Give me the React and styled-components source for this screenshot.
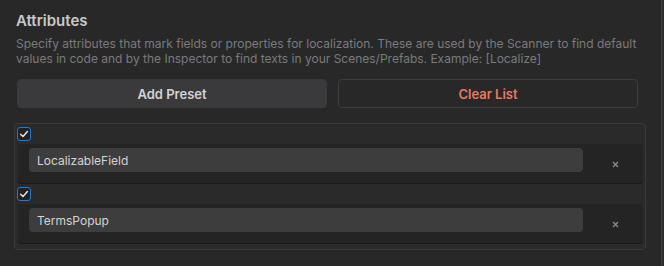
import React from 'react';
import styled, { createGlobalStyle } from 'styled-components';

const GlobalStyle = createGlobalStyle`
  html, body {
    margin: 0;
    padding: 0;
    background: #282829;
  }
  body {
    font-family: Inter, "Noto Sans", "Liberation Sans", sans-serif;
    -webkit-font-smoothing: antialiased;
  }
`;

const Page = styled.div`
  box-sizing: border-box;
  width: 664px;
  height: 266px;
  padding: 11px 16px 0 14px;
  background: #282829;
  border-right: 2px solid #2d2d2f;
  box-shadow: inset -1px 0 0 #3a3a3c;
  overflow: hidden;
`;

const Title = styled.h2`
  margin: 0 0 0 2px;
  font-size: 15px;
  font-weight: 600;
  line-height: 20px;
  color: #c9c9c9;
`;

const Description = styled.p`
  margin: 5px 0 0 2px;
  font-size: 12px;
  line-height: 15px;
  color: #7b7b7c;
`;

const ButtonRow = styled.div`
  display: flex;
  gap: 11px;
  margin: 13px 8px 0 3px;
`;

const ActionButton = styled.button`
  box-sizing: border-box;
  height: 29px;
  flex: ${({ $grow }) => $grow};
  border-radius: 4px;
  border: 1px solid ${({ $outlined }) => ($outlined ? '#3d3d3f' : '#3a3a3c')};
  background: ${({ $outlined }) => ($outlined ? 'transparent' : '#3a3a3c')};
  color: ${({ $danger }) => ($danger ? '#e37b64' : '#d4d4d4')};
  font-family: inherit;
  font-size: 13px;
  font-weight: 600;
  cursor: pointer;
`;

const List = styled.div`
  box-sizing: border-box;
  margin-top: 15px;
  border: 1px solid #3a3a3c;
  border-radius: 4px;
  padding: 0 0 5px 0;
  background: #2a2a2b;
`;

const Entry = styled.div`
  display: flex;
  flex-direction: column;
  padding-top: 3px;
`;

const Check = styled.span`
  box-sizing: border-box;
  display: flex;
  align-items: center;
  justify-content: center;
  width: 14px;
  height: 14px;
  margin-left: 2px;
  border: 1.5px solid #1f7ad6;
  border-radius: 3px;
  background: #222224;
`;

const Band = styled.div`
  display: flex;
  align-items: center;
  height: 40px;
  margin: 3px 2px 0 3px;
  padding: 4px 0 12px 11px;
  box-sizing: border-box;
  border-radius: 4px;
  background: #242425;
  box-shadow: inset 0 -1px 0 #19191a;
`;

const Field = styled.div`
  box-sizing: border-box;
  width: 554px;
  height: 24px;
  display: flex;
  align-items: center;
  padding-left: 8px;
  border-radius: 4px;
  background: #3d3d3e;
  color: #d4d4d4;
  font-size: 12px;
`;

const RemoveButton = styled.span`
  display: flex;
  align-items: center;
  justify-content: center;
  width: 16px;
  height: 16px;
  margin-left: 24px;
  align-self: center;
  transform: translateY(4px);
`;

const CheckMark = () => (
  <svg width="10" height="10" viewBox="0 0 10 10">
    <path d="M1.6 5.3 L4 7.5 L8.4 2.6" fill="none" stroke="#e2e2e2" strokeWidth="1.5" strokeLinecap="round" strokeLinejoin="round" />
  </svg>
);

const Cross = () => (
  <svg width="7" height="7" viewBox="0 0 7 7">
    <path d="M1 1 L6 6 M6 1 L1 6" stroke="#8c8c8c" strokeWidth="1.3" />
  </svg>
);

const entries = ['LocalizableField', 'TermsPopup'];

const App = () => (
  <>
    <GlobalStyle />
    <Page>
      <Title>Attributes</Title>
      <Description>
        Specify attributes that mark fields or properties for localization. These are used by the Scanner to find default
        values in code and by the Inspector to find texts in your Scenes/Prefabs. Example: [Localize]
      </Description>
      <ButtonRow>
        <ActionButton $grow="0 0 310px">Add Preset</ActionButton>
        <ActionButton $grow="1" $outlined $danger>Clear List</ActionButton>
      </ButtonRow>
      <List>
        {entries.map((name) => (
          <Entry key={name}>
            <Check>
              <CheckMark />
            </Check>
            <Band>
              <Field>{name}</Field>
              <RemoveButton>
                <Cross />
              </RemoveButton>
            </Band>
          </Entry>
        ))}
      </List>
    </Page>
  </>
);

export default App;
